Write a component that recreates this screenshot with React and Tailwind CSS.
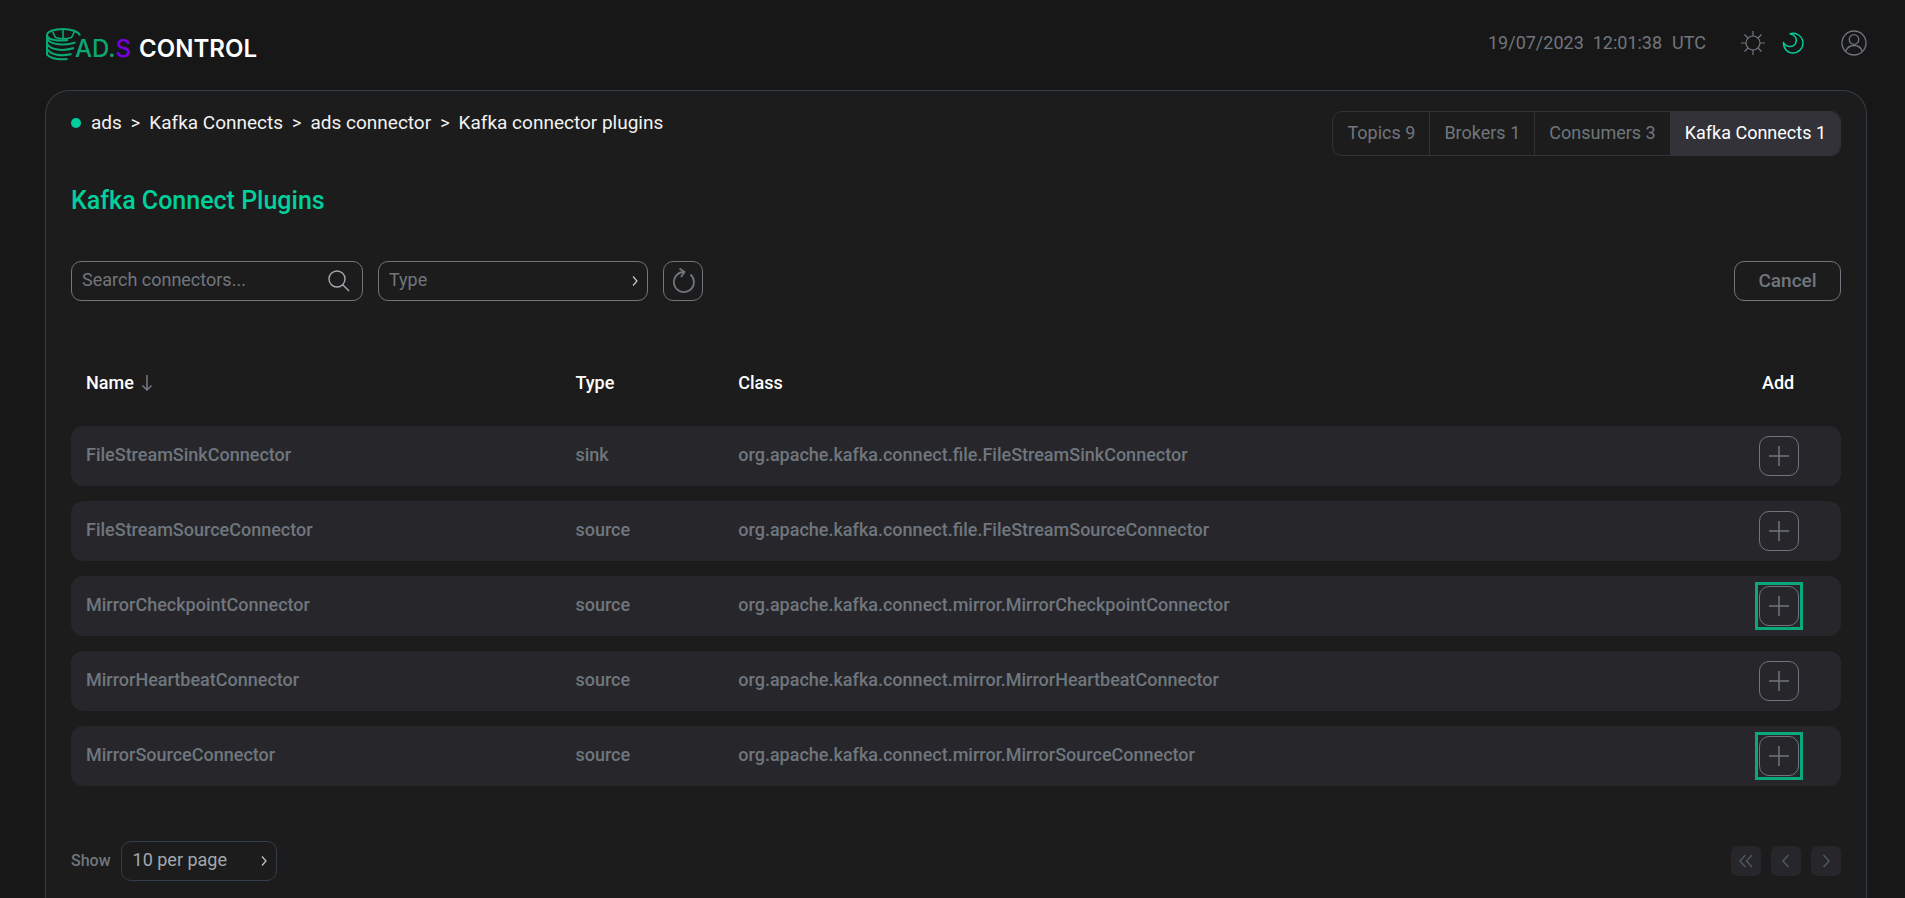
import { useState } from 'react'

const plugins = [
  { name: 'FileStreamSinkConnector', type: 'sink', className: 'org.apache.kafka.connect.file.FileStreamSinkConnector' },
  { name: 'FileStreamSourceConnector', type: 'source', className: 'org.apache.kafka.connect.file.FileStreamSourceConnector' },
  { name: 'MirrorCheckpointConnector', type: 'source', className: 'org.apache.kafka.connect.mirror.MirrorCheckpointConnector', highlighted: true },
  { name: 'MirrorHeartbeatConnector', type: 'source', className: 'org.apache.kafka.connect.mirror.MirrorHeartbeatConnector' },
  { name: 'MirrorSourceConnector', type: 'source', className: 'org.apache.kafka.connect.mirror.MirrorSourceConnector', highlighted: true },
]

const tabs = [
  { label: 'Topics 9', active: false },
  { label: 'Brokers 1', active: false },
  { label: 'Consumers 3', active: false },
  { label: 'Kafka Connects 1', active: true },
]

const crumbs = ['ads', 'Kafka Connects', 'ads connector', 'Kafka connector plugins']

function Logo() {
  return (
    <a href="#" aria-label="ADS Control" className="flex items-start">
      <svg width="36" height="34" viewBox="0 0 36 34" fill="none" stroke="#0aa873" strokeWidth="2">
        <path d="M35 7.500C33.500 3.500 26 1 18 1C9 1 2 3.600 2 7C2 10.500 8 12.500 16 12.500C19 12.500 21 12.400 23 12" />
        <path d="M7.500 3.500L10.500 9.500C15 11 22 11 26.500 9.500L29.500 3.500M18 2V10.500" strokeWidth="1.600" />
        <path d="M2 7V26.500C5 30 12 32 22.500 31" />
        <path d="M2 11C6 17 20 18 30.500 14.500M2 16C6 22 18 23.500 29 20M2 21C6 27 16 28.500 26.500 26" />
      </svg>
      <span className="-ml-[6px] mt-[9px] flex font-['Inter',sans-serif] text-2xl leading-6 font-medium text-white">
        <span className="text-[#0aa873]">AD.</span>
        <span className="mr-2 text-[#7b00e0]">S</span>
        <span className="font-semibold">CONTROL</span>
      </span>
    </a>
  )
}

function Chevron({ className }) {
  return (
    <svg width="8" height="12" viewBox="0 0 8 12" fill="none" stroke="currentColor" strokeWidth="1.200" className={className}>
      <path d="M2 1.500L6 6L2 10.500" />
    </svg>
  )
}

function Header() {
  return (
    <header className="flex items-start justify-between pt-7 pl-[45px] pr-[38px]">
      <Logo />
      <div className="flex h-[30px] items-center text-[#70767d]">
        <time className="whitespace-pre">19/07/2023  12:01:38</time>
        <span className="ml-[10px]">UTC</span>
        <button aria-label="Light theme" className="ml-[35px]">
          <svg width="24" height="24" viewBox="0 0 24 24" fill="none" stroke="currentColor" strokeWidth="1.200">
            <circle cx="12" cy="12" r="7" />
            <path d="M12 0V5M12 19V24M0 12H5M19 12H24M3.500 3.500L7 7M17 17L20.500 20.500M3.500 20.500L7 17M17 7L20.500 3.500" />
          </svg>
        </button>
        <button aria-label="Dark theme" className="ml-4 text-[#00d09c]">
          <svg width="24" height="24" viewBox="0 0 24 24" fill="none" stroke="currentColor" strokeWidth="1.400" strokeLinejoin="round">
            <path d="M9 2.800C13.500 3.500 17 8 14.500 12.500C12 17 5 16.500 2.500 11.500C2.300 17.500 6.500 22 12 22C17.500 22 22 17.500 22 12C22 5.500 15.500 0.800 9 2.800Z" />
          </svg>
        </button>
        <button aria-label="Account" className="ml-9">
          <svg width="26" height="26" viewBox="0 0 26 26" fill="none" stroke="currentColor" strokeWidth="1.300">
            <circle cx="13" cy="13" r="12" />
            <circle cx="13" cy="9.500" r="4.800" />
            <path d="M4.500 21.500C6 17.500 9 15.500 13 15.500C17 15.500 20 17.500 21.500 21.500" />
          </svg>
        </button>
      </div>
    </header>
  )
}

function AddButton({ name, highlighted }) {
  return (
    <div className={`flex w-12 h-12 items-center justify-center ${highlighted ? 'border-3 border-[#0aa87c]' : ''}`}>
      <button
        aria-label={`Add ${name}`}
        className="flex size-10 shrink-0 items-center justify-center rounded-[10px] border border-[#70767d] text-[#70767d]"
      >
        <svg width="20" height="20" viewBox="0 0 20 20" stroke="currentColor" strokeWidth="1.500">
          <path d="M10 0V20M0 10H20" />
        </svg>
      </button>
    </div>
  )
}

function PluginTable() {
  return (
    <table className="mt-10 w-full table-fixed border-separate border-spacing-x-0 border-spacing-y-[15px] text-left">
      <thead>
        <tr className="h-[55px] text-white">
          <th className="w-[28.500%] pb-0.5 pl-[15px] font-medium">
            <span className="flex items-center gap-[7px]">
              Name
              <svg width="12" height="16" viewBox="0 0 12 16" fill="none" stroke="#70767d" strokeWidth="1.600">
                <path d="M6 0V15M1.500 10.500L6 15L10.500 10.500" />
              </svg>
            </span>
          </th>
          <th className="w-[9.200%] pb-0.5 font-medium">Type</th>
          <th className="pb-0.5 font-medium">Class</th>
          <th className="w-[86px] pb-0.5 pl-[7px] font-medium">Add</th>
        </tr>
      </thead>
      <tbody>
        {plugins.map((plugin) => (
          <tr key={plugin.name} className="h-[60px] bg-[#26262b] font-medium text-[#70767d]">
            <td className="rounded-l-xl pb-0.5 pl-[15px]">{plugin.name}</td>
            <td className="pb-0.5">{plugin.type}</td>
            <td className="pb-0.5">{plugin.className}</td>
            <td className="rounded-r-xl">
              <AddButton name={plugin.name} highlighted={plugin.highlighted} />
            </td>
          </tr>
        ))}
      </tbody>
    </table>
  )
}

function PageButton({ label, disabled, children }) {
  return (
    <button aria-label={label} disabled={disabled} className="flex size-[30px] items-center justify-center rounded-md bg-[#26262b] text-[#4d5761]">
      <svg width="16" height="14" viewBox="0 0 16 14" fill="none" stroke="currentColor" strokeWidth="1.500">
        {children}
      </svg>
    </button>
  )
}

export default function App() {
  const [search, setSearch] = useState('')
  const [type, setType] = useState('')

  return (
    <div className="flex min-h-screen flex-col bg-[#171717] font-['Roboto',sans-serif] text-lg leading-6">
      <Header />
      <main className="ml-[45px] mr-[38px] mt-7 grow rounded-t-[24px] border border-b-0 border-[#343e48] bg-[#1c1c1c] px-[25px] pt-5">
        <div className="flex items-start justify-between">
          <nav aria-label="Breadcrumb" className="flex items-center text-[19px] text-[#f2f2f2]">
            <span className="mr-[10px] size-[10px] rounded-full bg-[#00d09c]"></span>
            {crumbs.map((crumb, i) => (
              <span key={crumb} className="flex">
                {i > 0 && <span className="mx-[9px] text-lg leading-6">&gt;</span>}
                <a href="#">{crumb}</a>
              </span>
            ))}
          </nav>
          <div className="flex h-[45px] overflow-hidden rounded-[10px] border border-[#323238]">
            {tabs.map((tab) => (
              <button
                key={tab.label}
                className={`border-r border-[#323238] px-[14px] pb-0.5 last:border-r-0 ${tab.active ? 'bg-[#323238] text-white' : 'text-[#70767d]'}`}
              >
                {tab.label}
              </button>
            ))}
          </div>
        </div>

        <h1 className="mt-[29px] text-[25px] leading-8 font-medium text-[#00d09c]">Kafka Connect Plugins</h1>

        <div className="mt-11 flex items-center gap-[15px]">
          <label className="flex h-10 w-[292px] items-center rounded-[10px] border border-[#70767d] pl-[10px] pr-3">
            <input
              aria-label="Search connectors"
              value={search}
              onChange={(e) => setSearch(e.target.value)}
              placeholder="Search connectors..."
              className="w-0 grow pb-0.5 outline-none placeholder:text-[#70767d]"
            />
            <svg width="22" height="22" viewBox="0 0 22 22" fill="none" stroke="#a3a8ae" strokeWidth="1.400">
              <circle cx="9" cy="9" r="8" />
              <path d="M14.500 14.500L21 21" />
            </svg>
          </label>
          <div className="relative">
            <select
              aria-label="Type"
              value={type}
              onChange={(e) => setType(e.target.value)}
              className="h-10 w-[270px] appearance-none rounded-[10px] border border-[#70767d] px-[10px] pb-0.5 text-[#70767d]"
            >
              <option value="">Type</option>
              <option value="sink">sink</option>
              <option value="source">source</option>
            </select>
            <Chevron className="pointer-events-none absolute right-[9px] top-[14px] text-[#c5c9ce]" />
          </div>
          <button aria-label="Refresh" className="flex size-10 items-center justify-center rounded-[10px] border border-[#70767d] text-[#70767d]">
            <svg width="24" height="26" viewBox="0 0 24 26" fill="none" stroke="currentColor" strokeWidth="1.800">
              <path d="M19.500 6.500A10 10 0 1 1 13 4" />
              <path d="M8.500 0.500L13.500 4L10 9" />
            </svg>
          </button>
          <button className="ml-auto h-10 w-[107px] rounded-[10px] border border-[#70767d] text-[19px] font-medium text-[#70767d]">
            Cancel
          </button>
        </div>

        <PluginTable />

        <div className="mt-10 flex items-center justify-between">
          <div className="flex items-center gap-[10px]">
            <label htmlFor="page-size" className="text-base font-medium text-[#70767d]">Show</label>
            <div className="relative">
              <select
                id="page-size"
                className="h-10 w-[156px] appearance-none rounded-[10px] border border-[#343e48] px-[11px] pb-0.5 text-[#a3a8ae]"
              >
                <option>10 per page</option>
                <option>20 per page</option>
                <option>50 per page</option>
              </select>
              <Chevron className="pointer-events-none absolute right-[9px] top-[14px] text-[#c5c9ce]" />
            </div>
          </div>
          <div className="flex gap-[10px]">
            <PageButton label="First page" disabled>
              <path d="M7.500 1L2 7L7.500 13M14 1L8.500 7L14 13" />
            </PageButton>
            <PageButton label="Previous page" disabled>
              <path d="M10.500 1L5 7L10.500 13" />
            </PageButton>
            <PageButton label="Next page" disabled>
              <path d="M5.500 1L11 7L5.500 13" />
            </PageButton>
          </div>
        </div>
      </main>
    </div>
  )
}
